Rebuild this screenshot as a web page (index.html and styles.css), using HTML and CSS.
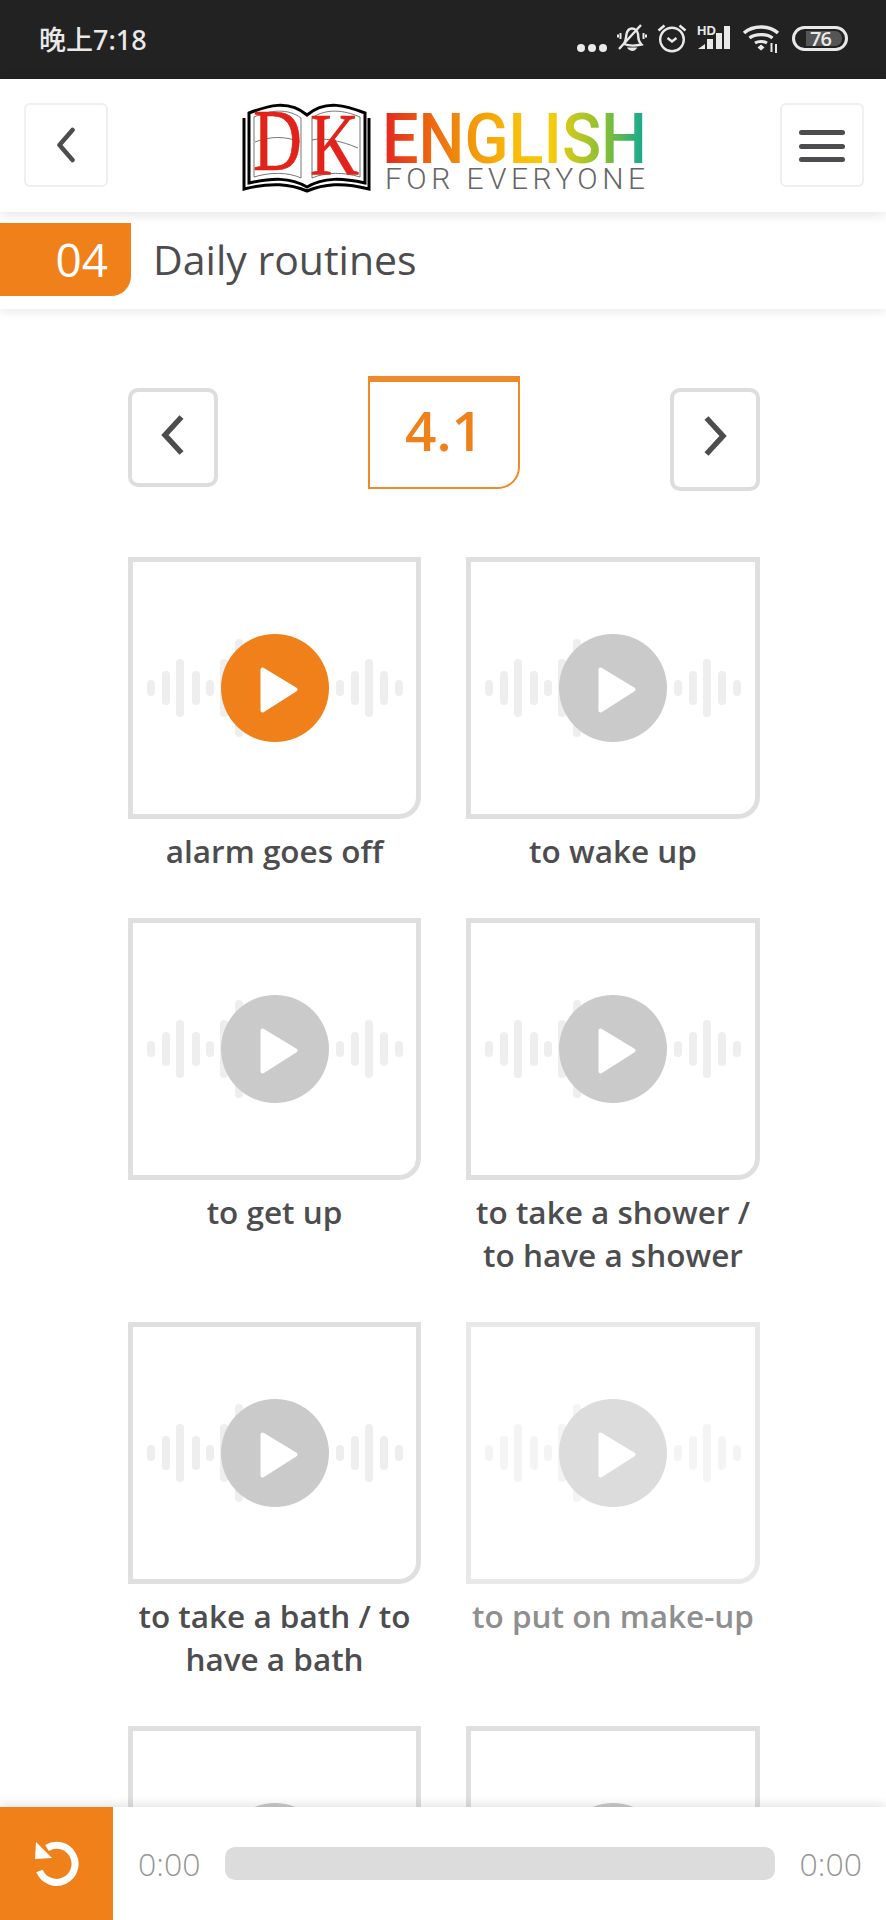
FILE: index.html
```html
<!DOCTYPE html>
<html lang="en">

<head>
    <meta charset="UTF-8">
    <meta name="viewport" content="width=device-width, initial-scale=1.0">
    <title>Daily routines</title>
    <link rel="stylesheet" href="styles.css">
</head>

<body>
    <svg class="defs" width="0" height="0">
        <symbol id="wave" viewBox="0 0 256 100">
            <rect x="0" y="42" width="8" height="16" rx="4"/>
            <rect x="15" y="33" width="8" height="34" rx="4"/>
            <rect x="29" y="21" width="8" height="58" rx="4"/>
            <rect x="45" y="33" width="8" height="34" rx="4"/>
            <rect x="59" y="42" width="8" height="16" rx="4"/>
            <rect x="73" y="21" width="8" height="58" rx="4"/>
            <rect x="88" y="1" width="8" height="98" rx="4"/>
            <rect x="189" y="42" width="8" height="16" rx="4"/>
            <rect x="204" y="33" width="8" height="34" rx="4"/>
            <rect x="218" y="21" width="8" height="58" rx="4"/>
            <rect x="233" y="33" width="8" height="34" rx="4"/>
            <rect x="248" y="42" width="8" height="16" rx="4"/>
        </symbol>
        <symbol id="play" viewBox="0 0 38 46">
            <path d="M2.500 2.500 L35.500 22.500 L2.500 43.500 Z" stroke-width="4" stroke-linejoin="round"/>
        </symbol>
        <linearGradient id="rainbow" gradientUnits="userSpaceOnUse" x1="143" y1="0" x2="402" y2="0">
            <stop offset="0" stop-color="#e5291f"/>
            <stop offset="0.14" stop-color="#ec5a12"/>
            <stop offset="0.3" stop-color="#f18f0b"/>
            <stop offset="0.5" stop-color="#fabb0a"/>
            <stop offset="0.64" stop-color="#f7cb0c"/>
            <stop offset="0.74" stop-color="#bcc822"/>
            <stop offset="0.86" stop-color="#7fbe38"/>
            <stop offset="1" stop-color="#14a992"/>
        </linearGradient>
    </svg>

    <div class="status-bar">
        <div class="clock">晚上7:18</div>
        <div class="status-icons">
            <svg class="ic-dots" width="30" height="10" viewBox="0 0 30 10">
                <circle cx="4" cy="5" r="4"/><circle cx="15" cy="5" r="4"/><circle cx="26" cy="5" r="4"/>
            </svg>
            <svg class="ic-bell" width="30" height="30" viewBox="0 0 30 30" fill="none">
                <path d="M7 21 C9 18 9 14 9.500 11 C10.500 7 13 5.500 15 5.500 C18 5.500 20.500 8 21 11 L21.500 16 C22 19 23 20 24.500 21.500 C18 23 12 23 7 21 Z" stroke-width="2.400"/>
                <path d="M12 25.500 C14 27.500 17 27.500 18.500 25.500 Z" stroke-width="1.800"/>
                <path d="M2 26 L24 2" stroke-width="2.400"/>
                <path d="M3.500 10 V16 M1 11.500 V14.500 M26.500 10 V16 M29 11.500 V14.500" stroke-width="2"/>
            </svg>
            <svg class="ic-alarm" width="30" height="30" viewBox="0 0 30 30" fill="none">
                <circle cx="15" cy="16.500" r="11.800" stroke-width="2.400"/>
                <path d="M10.500 15 L15 18.500 L19.500 15" stroke-width="2.400"/>
                <path d="M1.500 7.500 L7.500 2.500 M28.500 7.500 L22.500 2.500" stroke-width="2.600"/>
            </svg>
            <div class="signal">
                <span class="hd">HD</span>
                <svg width="34" height="24" viewBox="0 0 34 24">
                    <path d="M1 23 L8 18 V23 Z"/>
                    <rect x="10" y="13" width="6" height="10"/>
                    <rect x="19" y="7" width="6" height="16"/>
                    <rect x="27" y="0" width="6" height="23"/>
                </svg>
            </div>
            <svg class="ic-wifi" width="38" height="30" viewBox="0 0 38 30" fill="none">
                <path d="M2 10 C11 2 27 2 36 10" stroke-width="3.600"/>
                <path d="M7.500 15 C13 10.500 25 10.500 30.500 15" stroke-width="3.400"/>
                <path d="M13 20 C16 18 22 18 25 20" stroke-width="3"/>
                <path class="solid" d="M15.500 24.500 L19 21.500 L22.500 24.500 L19 27.500 Z"/>
                <path d="M29.500 20 V29 M34 21 V30" stroke-width="2"/>
            </svg>
            <div class="battery"><span class="battery-level">76</span></div>
        </div>
    </div>

    <div class="top-header">
        <div class="icon-btn">
            <svg width="20" height="36" viewBox="0 0 20 36" fill="none">
                <path d="M16.500 3 L3.500 18 L16.500 33" stroke-width="4.500"/>
            </svg>
        </div>
        <svg class="logo" width="405" height="92" viewBox="0 0 405 92">
            <path d="M2 18 V89 C30 82 48 84 65 91 C82 84 100 82 127 89 V18" class="book-back"/>
            <path d="M7 13 C25 6 46 -1 65 15 C84 -1 105 6 123 13 V83 C100 78 82 77 65 87 C48 77 30 78 7 83 Z" class="book-page"/>
            <path d="M12 17 C28 10 46 8 59 18 V78 M12 17 V77 C28 72 46 72 59 78 M70 18 C84 8 102 10 118 17 V77 C102 72 84 72 70 78 V18 M13 42 C28 36 44 36 58 42 M70 40 C80 37 100 41 116 48" class="book-lines"/>
            <text x="11" y="70" class="logo-dk" textLength="49" lengthAdjust="spacingAndGlyphs">D</text>
            <text x="68" y="74" class="logo-dk" textLength="49" lengthAdjust="spacingAndGlyphs">K</text>
            <text x="140" y="63" class="logo-english" textLength="265" lengthAdjust="spacingAndGlyphs" fill="url(#rainbow)">ENGLISH</text>
            <text x="143" y="89" class="logo-sub" textLength="260" lengthAdjust="spacing">FOR EVERYONE</text>
        </svg>
        <div class="icon-btn">
            <div class="burger"><span></span><span></span><span></span></div>
        </div>
    </div>

    <div class="chapter-bar">
        <div class="chapter-num">04</div>
        <div class="chapter-title">Daily routines</div>
    </div>

    <div class="content">
        <div class="pager">
            <div class="page-btn">
                <svg width="24" height="42" viewBox="0 0 24 42" fill="none">
                    <path d="M20.500 3 L4 21 L20.500 39" stroke-width="5.500"/>
                </svg>
            </div>
            <div class="page-tag">4.1</div>
            <div class="page-btn next">
                <svg width="24" height="42" viewBox="0 0 24 42" fill="none">
                    <path d="M3.500 3 L20 21 L3.500 39" stroke-width="5.500"/>
                </svg>
            </div>
        </div>

        <div class="cards">
            <div class="card active">
                <div class="sound">
                    <svg class="wave"><use href="#wave"/></svg>
                    <div class="play"><svg width="38" height="46"><use href="#play"/></svg></div>
                </div>
                <div class="label">alarm goes off</div>
            </div>
            <div class="card">
                <div class="sound">
                    <svg class="wave"><use href="#wave"/></svg>
                    <div class="play"><svg width="38" height="46"><use href="#play"/></svg></div>
                </div>
                <div class="label">to wake up</div>
            </div>
            <div class="card">
                <div class="sound">
                    <svg class="wave"><use href="#wave"/></svg>
                    <div class="play"><svg width="38" height="46"><use href="#play"/></svg></div>
                </div>
                <div class="label">to get up</div>
            </div>
            <div class="card">
                <div class="sound">
                    <svg class="wave"><use href="#wave"/></svg>
                    <div class="play"><svg width="38" height="46"><use href="#play"/></svg></div>
                </div>
                <div class="label">to take a shower / to have a shower</div>
            </div>
            <div class="card">
                <div class="sound">
                    <svg class="wave"><use href="#wave"/></svg>
                    <div class="play"><svg width="38" height="46"><use href="#play"/></svg></div>
                </div>
                <div class="label">to take a bath / to have a bath</div>
            </div>
            <div class="card faded">
                <div class="sound">
                    <svg class="wave"><use href="#wave"/></svg>
                    <div class="play"><svg width="38" height="46"><use href="#play"/></svg></div>
                </div>
                <div class="label">to put on make-up</div>
            </div>
            <div class="card">
                <div class="sound">
                    <svg class="wave"><use href="#wave"/></svg>
                    <div class="play"><svg width="38" height="46"><use href="#play"/></svg></div>
                </div>
            </div>
            <div class="card">
                <div class="sound">
                    <svg class="wave"><use href="#wave"/></svg>
                    <div class="play"><svg width="38" height="46"><use href="#play"/></svg></div>
                </div>
            </div>
        </div>
    </div>

    <div class="player">
        <div class="replay">
            <svg width="44" height="46" viewBox="0 0 44 46" fill="none">
                <path d="M12 7 A18.500 18.500 0 1 1 4.500 30" stroke-width="7"/>
                <path class="solid" d="M1 1 L0 18 L17 17 Z"/>
            </svg>
        </div>
        <div class="time">0:00</div>
        <div class="track"></div>
        <div class="time">0:00</div>
    </div>
</body>

</html>
```

FILE: styles.css
```css
* {
    box-sizing: border-box;
}

html,
body {
    margin: 0;
    height: 1920px;
    overflow: hidden;
}

body {
    display: flex;
    flex-direction: column;
    width: 886px;
    background: #fff;
    color: #4d4d4f;
    font-family: "Open Sans", "Noto Sans CJK SC", sans-serif;
}

.defs {
    display: block;
    height: 0;
}

/* status bar */
.status-bar {
    flex: none;
    display: flex;
    align-items: center;
    justify-content: space-between;
    height: 79px;
    padding: 0 38px 3px 39px;
    background: #222;
    color: #e9e9e9;
}

.clock {
    font-family: "Noto Sans", "Noto Sans CJK SC", sans-serif;
    font-size: 27px;
    font-weight: 500;
}

.status-icons {
    display: flex;
    align-items: center;
    gap: 10px;
}

.status-icons svg {
    display: block;
    fill: #e9e9e9;
}

.status-icons svg[fill="none"] {
    fill: none;
    stroke: #e9e9e9;
}

.status-icons .solid {
    fill: #e9e9e9;
    stroke: none;
}

.ic-dots {
    margin-top: 20px;
}

.signal {
    position: relative;
    width: 35px;
    height: 24px;
}

.signal .hd {
    position: absolute;
    left: 0;
    top: -2px;
    font-size: 13px;
    font-weight: 700;
    line-height: 14px;
    font-family: "Liberation Sans", sans-serif;
}

.battery {
    display: flex;
    align-items: center;
    justify-content: center;
    width: 56px;
    height: 25px;
    margin-left: 2px;
    padding: 0 3px;
    border: 3px solid #e9e9e9;
    border-radius: 13px;
}

.battery-level {
    width: 37px;
    height: 15px;
    margin-left: 8px;
    padding-left: 4px;
    background: #555;
    border-radius: 0 7px 7px 0;
    font-size: 20px;
    font-weight: 600;
    line-height: 15px;
    letter-spacing: -1px;
}

/* header */
.top-header {
    flex: none;
    position: relative;
    z-index: 2;
    display: flex;
    align-items: center;
    justify-content: space-between;
    height: 133px;
    padding: 0 22px 2px 24px;
    background: #fff;
    box-shadow: 0 2px 12px rgba(0, 0, 0, 0.12);
}

.icon-btn {
    display: flex;
    align-items: center;
    justify-content: center;
    width: 84px;
    height: 84px;
    border: 2px solid #efefef;
    border-radius: 6px;
}

.icon-btn svg {
    stroke: #4d4d4f;
    stroke-linecap: round;
    stroke-linejoin: round;
}

.burger {
    padding-top: 3px;
}

.burger span {
    display: block;
    width: 46px;
    height: 5px;
    margin: 8.500px 0;
    background: #4d4d4f;
    border-radius: 3px;
}

.logo {
    display: block;
    margin-top: 3px;
    overflow: visible;
}

.book-back {
    fill: none;
    stroke: #000;
    stroke-width: 3;
}

.book-page {
    fill: #fff;
    stroke: #000;
    stroke-width: 3;
}

.book-lines {
    fill: none;
    stroke: #666;
    stroke-width: 0.900;
}

.logo-dk {
    font-family: "Liberation Serif", serif;
    font-size: 88px;
    fill: #e2231a;
    stroke: #e2231a;
    stroke-width: 0.700;
}

.logo-english {
    font-family: "Roboto", sans-serif;
    font-size: 70px;
    font-weight: 500;
}

.logo-sub {
    font-family: "Roboto", sans-serif;
    font-size: 30px;
    font-weight: 300;
    fill: #666;
}

/* chapter */
.chapter-bar {
    flex: none;
    position: relative;
    z-index: 1;
    display: flex;
    align-items: center;
    gap: 22px;
    height: 97px;
    padding-top: 11px;
    padding-bottom: 13px;
    background: #fff;
    box-shadow: 0 2px 10px rgba(0, 0, 0, 0.1);
}

.chapter-num {
    width: 131px;
    height: 73px;
    padding-right: 23px;
    background: #f0801a;
    border-radius: 0 0 20px 0;
    color: #fff;
    font-size: 46px;
    line-height: 73px;
    text-align: right;
}

.chapter-title {
    font-size: 41px;
    line-height: 73px;
}

/* main part */
.content {
    flex: 1;
    min-height: 0;
    overflow: hidden;
    padding: 67px 126px 0 128px;
}

.pager {
    display: flex;
    justify-content: space-between;
    align-items: flex-start;
    margin-bottom: 66px;
}

.page-btn {
    display: flex;
    align-items: center;
    justify-content: center;
    width: 90px;
    height: 99px;
    margin-top: 12px;
    padding-bottom: 6px;
    border: 4px solid #ddd;
    border-radius: 10px;
}

.page-btn.next {
    height: 103px;
    padding-bottom: 8px;
}

.page-btn svg {
    stroke: #4d4d4f;
    stroke-linecap: butt;
    stroke-linejoin: miter;
}

.page-tag {
    width: 152px;
    height: 113px;
    border: 2.500px solid #ee8a2a;
    border-top: 6px solid #ee8a2a;
    border-radius: 0 0 22px 0;
    color: #f0801a;
    font-size: 55px;
    font-weight: 600;
    line-height: 96px;
    text-align: center;
}

.cards {
    display: grid;
    grid-template-columns: 293px 294px;
    justify-content: space-between;
    row-gap: 46px;
}

.sound {
    display: flex;
    align-items: center;
    justify-content: center;
    position: relative;
    height: 262px;
    border: 5px solid #dfdfdf;
    border-radius: 0 0 22px 0;
}

.wave {
    width: 256px;
    height: 100px;
    fill: #eee;
}

/* the round button sits over the wave */
.play {
    position: absolute;
    left: 50%;
    top: 50%;
    display: flex;
    align-items: center;
    justify-content: center;
    width: 108px;
    height: 108px;
    margin: -54px 0 0 -54px;
    padding: 3px 0 0 8px;
    background: #cacaca;
    border-radius: 50%;
}

.play svg {
    fill: #fff;
    stroke: #fff;
}

.card.active .play {
    background: #f0801a;
}

.label {
    padding: 10px 0 0;
    font-size: 31.500px;
    font-weight: 600;
    line-height: 43px;
    text-align: center;
}

.card.faded .sound {
    border-color: #e8e8e8;
}

.card.faded .wave {
    opacity: 0.6;
}

.card.faded .play {
    background: #dcdcdc;
}

.card.faded .label {
    color: #8f8f8f;
}

/* audio player */
.player {
    flex: none;
    position: relative;
    z-index: 3;
    display: flex;
    align-items: center;
    height: 113px;
    padding-right: 24px;
    background: #fff;
    box-shadow: 0 -2px 10px rgba(0, 0, 0, 0.12);
}

.replay {
    display: flex;
    align-items: center;
    justify-content: center;
    width: 113px;
    height: 113px;
    margin-right: 25px;
    background: #f0801a;
}

.replay svg {
    stroke: #fff;
}

.replay .solid {
    fill: #fff;
    stroke: none;
}

.time {
    color: #969696;
    font-size: 32px;
    font-weight: 300;
}

.track {
    flex: 1;
    height: 33px;
    margin: 0 25px;
    background: #dcdcdc;
    border-radius: 10px;
}
```
